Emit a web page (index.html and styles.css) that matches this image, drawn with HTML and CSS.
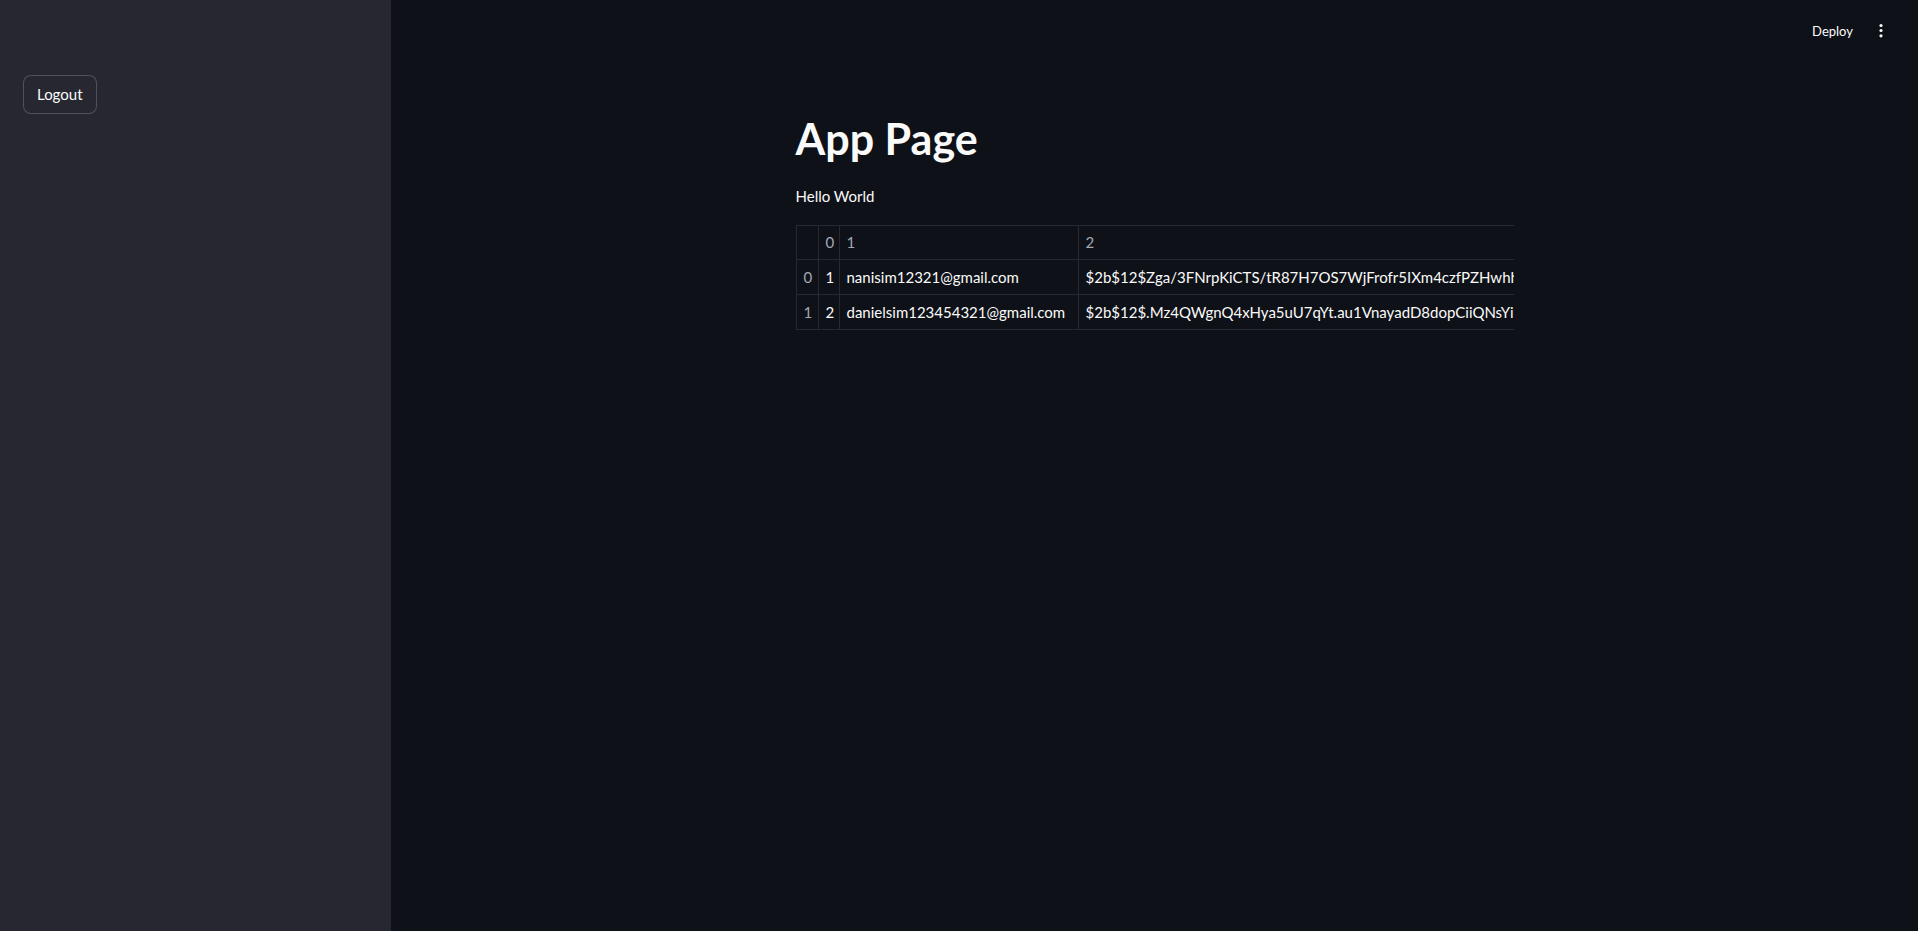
FILE: index.html
```html
<!DOCTYPE html>
<html lang="en">
<head>
<meta charset="utf-8">
<title>App Page</title>
<link rel="stylesheet" href="styles.css">
</head>
<body>
<div class="app">
  <aside class="sidebar">
    <button class="btn">Logout</button>
  </aside>
  <main class="main">
    <header class="toolbar">
      <button class="deploy">Deploy</button>
      <button class="menu" aria-label="Main menu">
        <svg width="8" height="16" viewBox="0 0 8 16"><circle cx="4" cy="2.5" r="1.6" fill="#fafafa"/><circle cx="4" cy="7.5" r="1.6" fill="#fafafa"/><circle cx="4" cy="12.8" r="1.6" fill="#fafafa"/></svg>
      </button>
    </header>
    <section class="block">
      <h1 class="title">App Page</h1>
      <p class="text">Hello World</p>
      <div class="grid-wrap">
        <table class="grid">
          <colgroup><col class="c-idx"><col class="c-0"><col class="c-1"><col class="c-2"></colgroup>
          <thead>
            <tr><th></th><th>0</th><th>1</th><th>2</th></tr>
          </thead>
          <tbody>
            <tr><td class="idx">0</td><td>1</td><td>nanisim12321@gmail.com</td><td>$2b$12$Zga/3FNrpKiCTS/tR87H7OS7WjFrofr5IXm4czfPZHwhhg</td></tr>
            <tr><td class="idx">1</td><td>2</td><td>danielsim123454321@gmail.com</td><td>$2b$12$.Mz4QWgnQ4xHya5uU7qYt.au1VnayadD8dopCiiQNsYiP</td></tr>
          </tbody>
        </table>
      </div>
    </section>
  </main>
</div>
</body>
</html>
```
FILE: styles.css
```css
html, body {
  margin: 0;
  height: 100%;
  background: #0e1117;
  color: #fafafa;
  font-family: Lato, "Liberation Sans", sans-serif;
}
body { overflow: hidden; }

.app {
  display: flex;
  height: 100vh;
}

.sidebar {
  width: 391px;
  flex: none;
  background: #262730;
  padding: 75px 0 0 23px;
  box-sizing: border-box;
}

.btn {
  height: 39px;
  padding: 0 13px;
  background: #262730;
  color: #fafafa;
  border: 1px solid rgba(250, 250, 250, 0.2);
  border-radius: 8px;
  font-family: Lato, "Liberation Sans", sans-serif;
  font-size: 15px;
  line-height: 1;
}

.main {
  flex: 1;
  display: flex;
  flex-direction: column;
  min-width: 0;
}

.toolbar {
  height: 62px;
  display: flex;
  justify-content: flex-end;
  align-items: center;
  gap: 14px;
  padding-right: 23px;
}

.deploy {
  background: none;
  border: none;
  color: #fafafa;
  font-family: Lato, "Liberation Sans", sans-serif;
  font-size: 13px;
  padding: 0;
}

.menu {
  width: 28px;
  height: 28px;
  background: none;
  border: none;
  padding: 0;
  display: flex;
  align-items: center;
  justify-content: center;
}

.block {
  width: 718px;
  margin: 0 auto;
  padding-top: 51px;
}

.title {
  margin: 0;
  font-size: 43px;
  font-weight: 700;
  line-height: 1.2;
  color: #fafafa;
}

.text {
  margin: 19px 0 0;
  font-size: 15px;
  line-height: 24px;
}

.grid-wrap {
  margin-top: 17px;
  width: 718px;
  overflow: hidden;
}

.grid {
  border-collapse: collapse;
  table-layout: fixed;
  width: 1000px;
  font-size: 15px;
}

.c-idx { width: 22px; }
.c-0 { width: 21px; }
.c-1 { width: 239px; }
.c-2 { width: 718px; }

.grid th, .grid td {
  border: 1px solid #262930;
  padding: 0 7px;
  height: 35px;
  text-align: left;
  white-space: nowrap;
  overflow: hidden;
  font-weight: 400;
  box-sizing: border-box;
}

.grid th {
  color: #a3a8b4;
  height: 34px;
}

.grid td.idx { color: #a3a8b4; }
```
